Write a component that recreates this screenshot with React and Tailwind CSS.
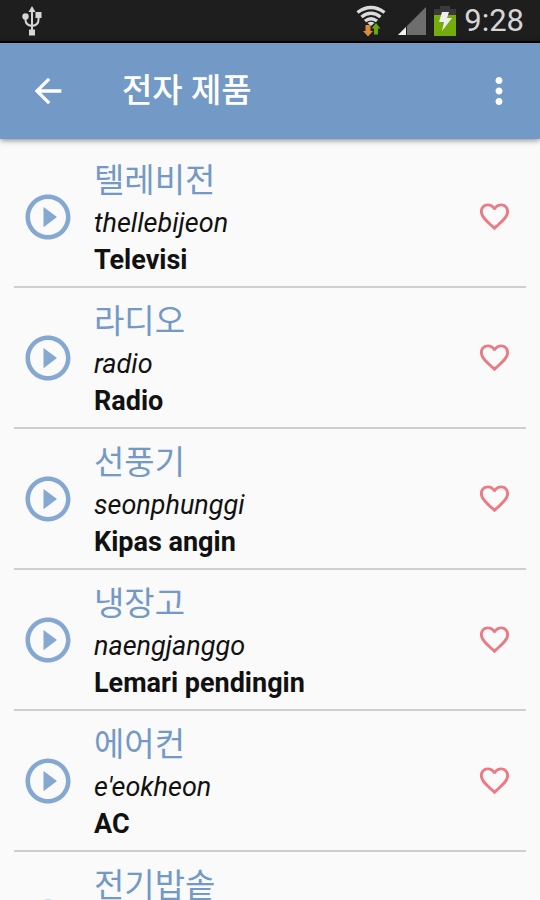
import React, { useState } from 'react';
import { MdArrowBack, MdFavorite, MdFavoriteBorder, MdMoreVert, MdPlayCircleOutline } from 'react-icons/md';

const WORDS = [
    { korean: '텔레비전', roman: 'thellebijeon', meaning: 'Televisi' },
    { korean: '라디오', roman: 'radio', meaning: 'Radio' },
    { korean: '선풍기', roman: 'seonphunggi', meaning: 'Kipas angin' },
    { korean: '냉장고', roman: 'naengjanggo', meaning: 'Lemari pendingin' },
    { korean: '에어컨', roman: "e'eokheon", meaning: 'AC' },
    { korean: '전기밥솥' },
];

const UsbIcon = () => (
    <svg width="20" height="30" viewBox="0 0 20 30" fill="none" stroke="#d6d6d6" strokeWidth="2">
        <path d="M10 4v21M3.500 11v3q0 5 6.500 6M16.500 9v5q0 5-6.500 6" />
        <path d="M10 0l3.500 6h-7z" fill="#d6d6d6" stroke="none" />
        <circle cx="3.500" cy="10.500" r="3.200" fill="#d6d6d6" stroke="none" />
        <path d="M13.500 6h6v6h-6zM7 23.500h6v6H7z" fill="#d6d6d6" stroke="none" />
    </svg>
);

const WifiIcon = () => (
    <svg width="30" height="32" viewBox="0 0 30 32" fill="none" stroke="#dcdcdc" strokeWidth="3.400">
        <path d="M1.500 7.500Q15-2.500 28.500 7.500" />
        <path d="M5.500 12Q15 4.500 24.500 12" />
        <path d="M9 16Q15 11.500 21 16" />
        <path d="M11.500 18Q15 15.500 18.500 18L15 21z" fill="#dcdcdc" stroke="none" />
        <path d="M9.500 20h5v6h2.500l-5 5.500-5-5.500h2.500z" fill="#dd8a3c" stroke="none" />
        <path d="M20 18l4.500 5.500h-2.500v6h-4v-6h-2.500z" fill="#6aa80f" stroke="none" />
    </svg>
);

const SignalIcon = () => (
    <svg width="28" height="28" viewBox="0 0 28 28">
        <path d="M28 0v28H0z" fill="#6e6e6e" />
        <path d="M8 20v8H0z" fill="#f0f0f0" />
        <path d="M8 20v8h1v-9z" fill="#1e1e1e" />
    </svg>
);

const BatteryIcon = () => (
    <svg width="22" height="30" viewBox="0 0 22 30">
        <path d="M6 0h10v3h6v6H0V3h6z" fill="#3a3a3a" />
        <path d="M0 9h22v21H0z" fill="#76ab0c" />
        <path d="M8 6h7l-2 6h5L8 25l2-9H5z" fill="#eeeeee" />
    </svg>
);

const StatusBar = () => (
    <div className="flex h-[43px] shrink-0 items-center justify-between border-b-2 border-black bg-[#1e1e1e] pr-4 pl-[22px]">
        <UsbIcon />
        <div className="flex items-center">
            <WifiIcon />
            <div className="flex items-center gap-2 pl-3">
                <SignalIcon />
                <BatteryIcon />
                <span className="text-[31px] leading-10 text-[#d6d6d6]">9:28</span>
            </div>
        </div>
    </div>
);

const AppBar = () => (
    <header className="z-10 flex h-24 shrink-0 items-center bg-[#7399c6] pr-5 pl-7 text-white shadow-[0_1px_6px_rgba(0,0,0,0.5)]">
        <button type="button" aria-label="Back">
            <MdArrowBack size={40} />
        </button>
        <h1 className="flex-1 pl-[54px] text-[33px] leading-10 font-medium">전자 제품</h1>
        <button type="button" aria-label="More options">
            <MdMoreVert size={42} />
        </button>
    </header>
);

const WordRow = ({ word }) => {
    const [liked, setLiked] = useState(false);
    const Heart = liked ? MdFavorite : MdFavoriteBorder;

    return (
        <li className="mx-3.5 flex min-h-[141px] items-center border-b-2 border-[#cfcfcf] pt-2 pr-3.5 pb-2 pl-[7px]">
            <button type="button" aria-label={`Play ${word.korean}`} className="text-[#84a8d1]">
                <MdPlayCircleOutline size={54} />
            </button>
            <div className="flex-1 self-start pt-[3px] pl-[19px]">
                <p className="text-[33px] leading-[46px] text-[#7399c6]">{word.korean}</p>
                {word.roman && <p className="text-[27px] leading-[38px] text-[#111111] italic">{word.roman}</p>}
                {word.meaning && <p className="text-[27px] leading-9 font-bold text-[#111111]">{word.meaning}</p>}
            </div>
            <button
                type="button"
                aria-label="Favorite"
                aria-pressed={liked}
                onClick={() => setLiked(!liked)}
                className="text-[#ea7a83]"
            >
                <Heart size={35} />
            </button>
        </li>
    );
};

export default function App() {
    return (
        <div className="flex h-screen flex-col bg-[#fafafa] font-[Roboto,'Noto_Sans_CJK_KR',sans-serif]">
            <StatusBar />
            <AppBar />
            <main className="flex-1 overflow-y-auto pt-2 [scrollbar-width:none]">
                <ul>
                    {WORDS.map((word) => (
                        <WordRow key={word.korean} word={word} />
                    ))}
                </ul>
            </main>
        </div>
    );
}
